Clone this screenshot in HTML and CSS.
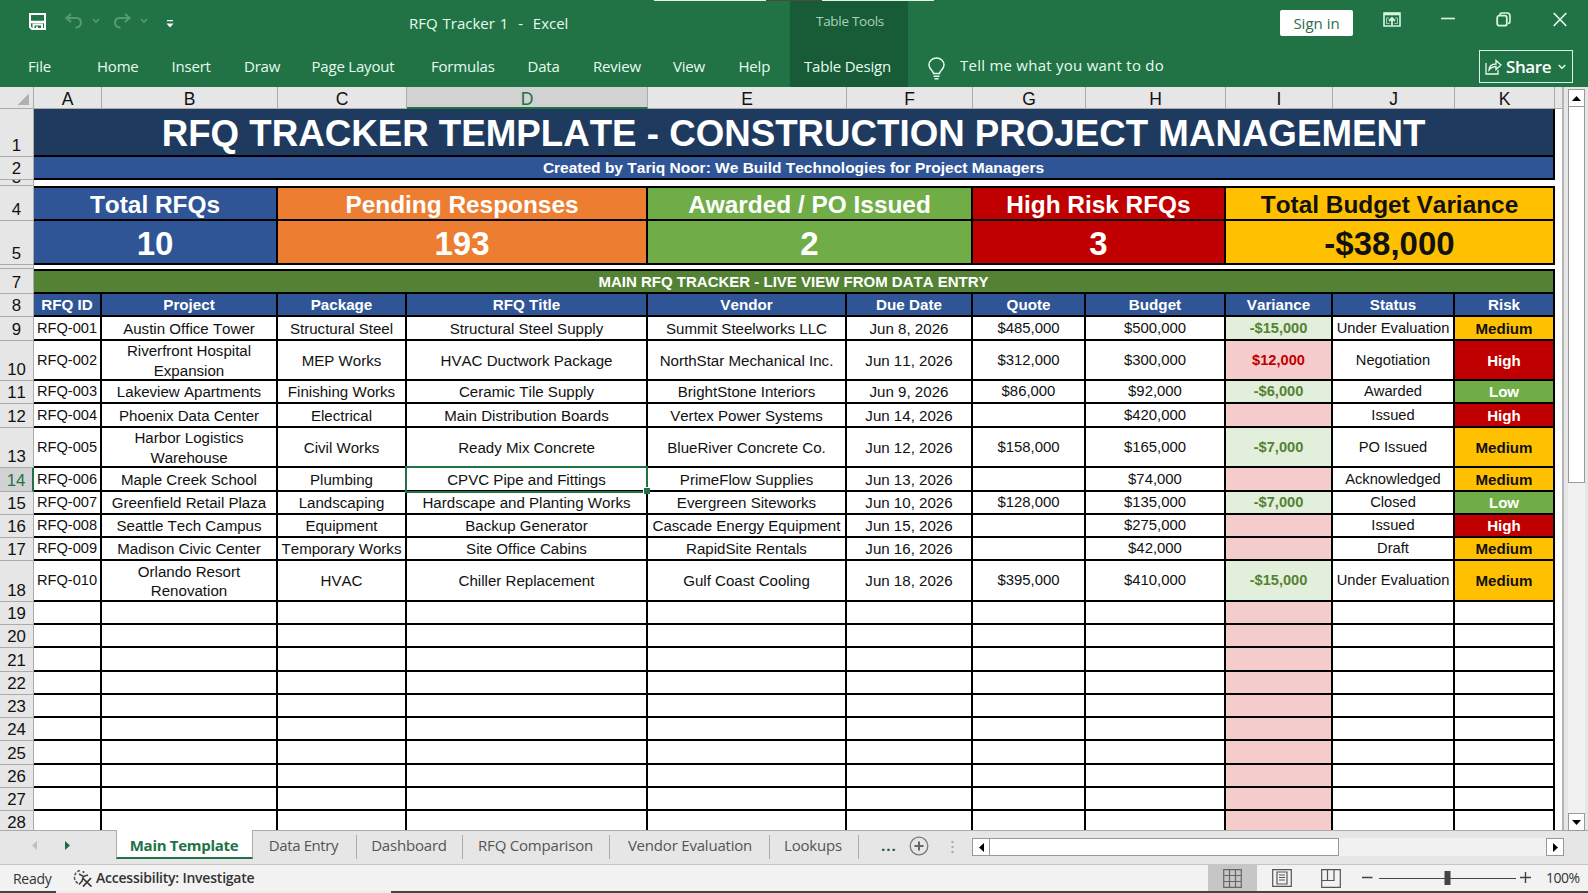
FILE: index.html
```html
<!DOCTYPE html>
<html lang="en">
<head>
	<meta charset="utf-8">
	<meta name="viewport" content="width=device-width, initial-scale=1">
	<title>RFQ Tracker 1 - Excel</title>
	<link rel="stylesheet" href="styles.css">
</head>
<body>
	<header class="ribbon">
		<div class="edge">
			<span class="edge-light"></span>
			<span class="edge-dark"></span>
			<span class="edge-light"></span>
		</div>
		<div class="titlebar">
			<div class="quick">
				<svg class="save" width="17" height="17" viewBox="0 0 17 17"><path d="M1 1h15v15H3L1 14z" fill="none" stroke="#fff" stroke-width="2"/><path d="M1 9h15" stroke="#fff" stroke-width="2.500"/><path d="M4.500 16v-4.500h8.500V16M8 16v-2.500" fill="none" stroke="#fff" stroke-width="2"/></svg>
				<svg class="undo" width="18" height="16" viewBox="0 0 18 16"><path d="M6 1L1.500 5L6 9M2 5h9c3.500 0 5 2 5 4.500c0 3-2.500 5-5.500 5" fill="none" stroke="#549a70" stroke-width="2.200"/></svg>
				<svg class="chev" width="8" height="6" viewBox="0 0 8 6"><path d="M1 1l3 3l3-3" fill="none" stroke="#549a70" stroke-width="1.600"/></svg>
				<svg class="redo" width="18" height="16" viewBox="0 0 18 16"><path d="M12 1l4.500 4L12 9M16 5H7C3.500 5 2 7 2 9.500c0 3 2.500 5 5.500 5" fill="none" stroke="#549a70" stroke-width="2.200"/></svg>
				<svg class="chev" width="8" height="6" viewBox="0 0 8 6"><path d="M1 1l3 3l3-3" fill="none" stroke="#549a70" stroke-width="1.600"/></svg>
				<svg class="custom" width="8" height="8" viewBox="0 0 8 8"><path d="M1 0h6v1.300H1zM0.500 3.500h7L4 7.500z" fill="#fff"/></svg>
			</div>
			<h1 class="doc">RFQ Tracker 1&nbsp; -&nbsp; Excel</h1>
			<div class="context-label">Table Tools</div>
			<div class="window">
				<button class="signin">Sign in</button>
				<svg class="w-ribbon" width="18" height="15" viewBox="0 0 18 15"><path d="M1 1h16v13H1z" fill="none" stroke="#d9f5e3" stroke-width="1.600"/><path d="M1 2h16" stroke="#d9f5e3" stroke-width="2.600"/><path d="M9 13V6.500M6 9l3-3l3 3" fill="none" stroke="#d9f5e3" stroke-width="1.800"/><path d="M6 6H3.500v5.500h3M12 6h2.500v5.500h-3" fill="none" stroke="#a5d1b6" stroke-width="1"/></svg>
				<svg class="w-min" width="14" height="15" viewBox="0 0 14 15"><path d="M0 6.500h14" stroke="#d9f5e3" stroke-width="1.600"/></svg>
				<svg class="w-max" width="15" height="15" viewBox="0 0 15 15"><rect x="1.200" y="3.700" width="9.600" height="10" rx="2" fill="none" stroke="#d9f5e3" stroke-width="1.800"/><path d="M4 3V2.500C4 1.500 5 1 6 1h5c2 0 3 1 3 3v5c0 1.500-.8 2.500-2 2.500" fill="none" stroke="#d9f5e3" stroke-width="1.600"/></svg>
				<svg class="w-close" width="14" height="15" viewBox="0 0 14 15"><path d="M.7 1l12.600 13M13.300 1L.7 14" stroke="#e6fbee" stroke-width="1.600"/></svg>
			</div>
		</div>
		<div class="menubar">
			<nav class="menu">
				<a>File</a><a>Home</a><a>Insert</a><a>Draw</a><a>Page Layout</a><a>Formulas</a><a>Data</a><a>Review</a><a>View</a><a>Help</a>
			</nav>
			<a class="context-tab">Table Design</a>
			<svg class="bulb" width="17" height="23" viewBox="0 0 17 23"><path d="M5.500 16.500c0-3-4.500-4-4.500-8.500a7.500 7 0 0 1 15 0c0 4.500-4.500 5.500-4.500 8.500zM5.500 19.300h6M6.500 21.800h4" fill="none" stroke="#e6fbee" stroke-width="1.500"/></svg>
			<span class="tell">Tell me what you want to do</span>
			<button class="share">
				<svg width="17" height="17" viewBox="0 0 17 17"><path d="M1 5v11h12v-4M4 12c.3-4 3-6 7-6V2.500L16 7l-5 4.500V8.500C8 8.500 6 9.500 4 12z" fill="none" stroke="#e6fbee" stroke-width="1.300"/></svg>
				Share
				<svg class="share-chev" width="8" height="6" viewBox="0 0 8 6"><path d="M.7 1L4 4.300L7.300 1" fill="none" stroke="#e6fbee" stroke-width="1.400"/></svg>
			</button>
		</div>
	</header>

	<main class="work">
		<div class="sheet"></div>
		<div class="vscroll">
			<span class="sbtn"><svg width="9" height="5" viewBox="0 0 9 5"><path d="M4.500 0L9 5H0z"/></svg></span>
			<span class="vthumb"></span>
			<span class="sbtn"><svg width="9" height="5" viewBox="0 0 9 5"><path d="M0 0h9L4.500 5z"/></svg></span>
		</div>
	</main>

	<div class="tabs">
		<svg class="nav-prev" width="5" height="9" viewBox="0 0 5 9"><path d="M5 0v9L0 4.500z" fill="#bfbfbf"/></svg>
		<svg class="nav-next" width="5" height="9" viewBox="0 0 5 9"><path d="M0 0v9l5-4.500z" fill="#1d6b41"/></svg>
		<a class="tab active">Main Template</a>
		<a class="tab t-entry">Data Entry</a>
		<a class="tab t-dash">Dashboard</a>
		<a class="tab t-comp">RFQ Comparison</a>
		<a class="tab t-vend">Vendor Evaluation</a>
		<a class="tab t-look">Lookups</a>
		<span class="more">...</span>
		<svg class="add" width="20" height="20" viewBox="0 0 20 20"><circle cx="10" cy="10" r="8.800" fill="none" stroke="#7a7a7a" stroke-width="1.300"/><path d="M10 5.500v9M5.500 10h9" stroke="#666" stroke-width="2"/></svg>
		<svg class="grip" width="3" height="14" viewBox="0 0 3 14"><path d="M.5 1h2v2h-2zM.5 6h2v2h-2zM.5 11h2v2h-2z" fill="#a6a6a6"/></svg>
		<div class="hscroll">
			<span class="sbtn"><svg width="5" height="9" viewBox="0 0 5 9"><path d="M5 0v9L0 4.500z"/></svg></span>
			<span class="hthumb"></span>
			<span class="sbtn"><svg width="5" height="9" viewBox="0 0 5 9"><path d="M0 0v9l5-4.500z"/></svg></span>
		</div>
	</div>

	<footer class="status">
		<span class="ready">Ready</span>
		<svg class="access" width="20" height="18" viewBox="0 0 20 18"><path d="M7 1.500C3 2.500 1.500 5.500 1.500 8.500c0 3 2 5.500 5 6.500" fill="none" stroke="#555" stroke-width="1.500" stroke-dasharray="3 1.500"/><path d="M6 5l4.500 2.500L15 6M10.500 7.500L9 12l-3 3.500M10.500 2v2" fill="none" stroke="#444" stroke-width="1.600"/><path d="M9.500 9l9 8.500M18 9l-8 8.500" stroke="#333" stroke-width="1.700"/></svg>
		<span class="investigate">Accessibility: Investigate</span>
		<span class="view on"><svg width="19" height="19" viewBox="0 0 19 19"><path d="M.7.700h17.600v17.600H.7zM6.500.700v17.600M12.500.700v17.600M.7 6.500h17.600M.7 12.500h17.600" fill="none" stroke="#666" stroke-width="1.200"/></svg></span>
		<span class="view"><svg width="20" height="18" viewBox="0 0 20 18"><path d="M.7.700h18.600v16.600H.7zM5 3h10v12H5zM7 6h6M7 8.500h6M7 11h6" fill="none" stroke="#555" stroke-width="1.200"/></svg></span>
		<span class="view"><svg width="20" height="19" viewBox="0 0 20 19"><path d="M.7.700h18.600v17.600H.7zM.7 11.500H13V.700M6.500.700v10.800" fill="none" stroke="#555" stroke-width="1.200"/></svg></span>
		<svg class="zoom" width="170" height="20" viewBox="0 0 170 20"><path d="M0 9.500h10.500M158 9.500h11M163.500 4v11" stroke="#444" stroke-width="1.400"/><path d="M17 10.500h137" stroke="#444" stroke-width="1.200"/><rect x="82.500" y="3" width="6" height="14" fill="#444"/></svg>
		<span class="percent">100%</span>
	</footer>
	<div class="taskbar"><span></span></div>

<script type="text/javascript">
	let sheet = document.querySelector(".sheet")
	let letters = ["A", "B", "C", "D", "E", "F", "G", "H", "I", "J", "K"]
	let heads = ["RFQ ID", "Project", "Package", "RFQ Title", "Vendor", "Due Date", "Quote", "Budget", "Variance", "Status", "Risk"]
	let rfqs = [
		["RFQ-001", "Austin Office Tower", "Structural Steel", "Structural Steel Supply", "Summit Steelworks LLC", "Jun 8, 2026", "$485,000", "$500,000", "-$15,000", "Under Evaluation", "Medium"],
		["RFQ-002", "Riverfront Hospital Expansion", "MEP Works", "HVAC Ductwork Package", "NorthStar Mechanical Inc.", "Jun 11, 2026", "$312,000", "$300,000", "$12,000", "Negotiation", "High"],
		["RFQ-003", "Lakeview Apartments", "Finishing Works", "Ceramic Tile Supply", "BrightStone Interiors", "Jun 9, 2026", "$86,000", "$92,000", "-$6,000", "Awarded", "Low"],
		["RFQ-004", "Phoenix Data Center", "Electrical", "Main Distribution Boards", "Vertex Power Systems", "Jun 14, 2026", "", "$420,000", "", "Issued", "High"],
		["RFQ-005", "Harbor Logistics Warehouse", "Civil Works", "Ready Mix Concrete", "BlueRiver Concrete Co.", "Jun 12, 2026", "$158,000", "$165,000", "-$7,000", "PO Issued", "Medium"],
		["RFQ-006", "Maple Creek School", "Plumbing", "CPVC Pipe and Fittings", "PrimeFlow Supplies", "Jun 13, 2026", "", "$74,000", "", "Acknowledged", "Medium"],
		["RFQ-007", "Greenfield Retail Plaza", "Landscaping", "Hardscape and Planting Works", "Evergreen Siteworks", "Jun 10, 2026", "$128,000", "$135,000", "-$7,000", "Closed", "Low"],
		["RFQ-008", "Seattle Tech Campus", "Equipment", "Backup Generator", "Cascade Energy Equipment", "Jun 15, 2026", "", "$275,000", "", "Issued", "High"],
		["RFQ-009", "Madison Civic Center", "Temporary Works", "Site Office Cabins", "RapidSite Rentals", "Jun 16, 2026", "", "$42,000", "", "Draft", "Medium"],
		["RFQ-010", "Orlando Resort Renovation", "HVAC", "Chiller Replacement", "Gulf Coast Cooling", "Jun 18, 2026", "$395,000", "$410,000", "-$15,000", "Under Evaluation", "Medium"]
	]
	let html = ""

	function cell(classes, text) {
		html += `<div class="${classes}">${text}</div>`
	}

	function rowHead(n) {
		let extra = n == 3 ? " tiny" : n == 14 ? " current" : ""
		cell("rh" + extra, n == 6 ? "" : n)
	}

	cell("corner", "")
	letters.forEach(l => cell(l == "D" ? "ch current" : "ch", l))
	cell("ch-rest", "")

	rowHead(1)
	cell("cell all title", "RFQ TRACKER TEMPLATE - CONSTRUCTION PROJECT MANAGEMENT")
	rowHead(2)
	cell("cell all subtitle", "Created by Tariq Noor: We Build Technologies for Project Managers")
	rowHead(3)
	cell("spacer", "")

	let kpis = [["Total RFQs", "10", "blue s2"], ["Pending Responses", "193", "orange s2"], ["Awarded / PO Issued", "2", "green s2"], ["High Risk RFQs", "3", "red s2"], ["Total Budget Variance", "-$38,000", "yellow s3"]]
	rowHead(4)
	kpis.forEach(k => cell("cell kpi-label " + k[2], k[0]))
	rowHead(5)
	kpis.forEach(k => cell("cell kpi-value " + k[2], k[1]))
	rowHead(6)
	cell("spacer", "")
	rowHead(7)
	cell("cell all section", "MAIN RFQ TRACKER - LIVE VIEW FROM DATA ENTRY")
	rowHead(8)
	heads.forEach(h => cell("cell blue th", h))

	let risk = { Medium: "yellow", High: "red", Low: "green" }
	for (let n = 9; n <= 28; n++) {
		rowHead(n)
		let data = rfqs[n - 9] || letters.map(() => "")
		data.forEach((text, i) => {
			let c = "cell data col-" + letters[i].toLowerCase()
			if (i == 8) c += text[0] == "-" ? " good" : " bad"
			if (i == 10 && text) c += " " + risk[text]
			if (i == 3 && n == 14) c += " selected"
			cell(c, text)
		})
	}
	sheet.innerHTML = html
</script>
</body>
</html>
```
FILE: styles.css
```css
*{
	box-sizing: border-box;
	margin: 0;
}

body{
	width: 1588px;
	height: 893px;
	overflow: hidden;
	display: flex;
	flex-direction: column;
	background: #e6e6e6;
	font-family: 'Open Sans', 'Noto Sans', sans-serif;
	font-kerning: none;
}

svg{
	display: block;
	flex: none;
}

button{
	font-family: inherit;
	padding: 0;
}

/* ribbon */
.ribbon{
	height: 87px;
	flex: none;
	background: #217346;
	color: #e6fbee;
	display: flex;
	flex-direction: column;
}

.edge{
	height: 1px;
	display: flex;
	padding-left: 654px;
}

.edge-light{
	width: 112px;
	background: #e3f5ea;
}

.edge-dark{
	width: 56px;
	background: #4d4a3c;
}

.titlebar{
	height: 43px;
	display: flex;
}

.quick{
	width: 409px;
	display: flex;
	align-items: flex-start;
	padding: 12px 0 0 29px;
}

.undo{
	margin-left: 19px;
}

.chev{
	margin: 5px 0 0 9px;
}

.redo{
	margin-left: 13px;
}

.custom{
	margin: 7px 0 0 18px;
}

.doc{
	width: 381px;
	font-size: 15px;
	font-weight: 400;
	line-height: 45px;
	word-spacing: 1px;
	white-space: nowrap;
}

.context-label{
	width: 118px;
	background: #185c37;
	text-align: center;
	font-size: 13.5px;
	line-height: 41px;
	letter-spacing: -0.3px;
	padding-left: 2px;
	color: #a9d3b9;
}

.window{
	flex: 1;
	display: flex;
	align-items: flex-start;
	padding: 11px 21px 0 0;
	justify-content: flex-end;
}

.signin{
	width: 73px;
	height: 26px;
	margin: -2px 30px 0 0;
	border: none;
	border-radius: 2px;
	background: #fff;
	color: #2f6b4a;
	font-size: 15px;
}

.w-min{
	margin-left: 40px;
}

.w-max{
	margin-left: 41px;
}

.w-close{
	margin-left: 42px;
}

.menubar{
	height: 43px;
	display: flex;
	font-size: 15px;
	line-height: 44px;
	letter-spacing: -0.2px;
	white-space: nowrap;
}

.menu{
	width: 790px;
	padding-left: 28px;
	display: grid;
	grid-template-columns: 69px 74.5px 72.5px 67.5px 119.5px 96.5px 65.5px 80px 65.5px 51px;
}

.context-tab{
	width: 118px;
	background: #185c37;
	padding-left: 14px;
}

.bulb{
	margin: 13px 15px 0 20px;
}

.tell{
	line-height: 42px;
	letter-spacing: 0.25px;
}

.share{
	width: 94px;
	height: 33px;
	margin: 6px 15px 0 auto;
	border: 1px solid #d9f5e3;
	background: none;
	color: #fff;
	font-size: 17px;
	font-weight: 600;
	letter-spacing: -0.4px;
	display: flex;
	align-items: center;
	padding-left: 5px;
	gap: 4px;
}

.share-chev{
	margin-left: 3px;
}

/* sheet */
.work{
	height: 744px;
	flex: none;
	display: flex;
	border-bottom: 1px solid #ababab;
}

.sheet{
	width: 1564px;
	overflow: hidden;
	background: #fff;
	border-right: 2px solid #b5b5b5;
	display: grid;
	grid-template-columns: 34px 68px 176px 129px 241px 199px 126px 113px 140px 107px 122px 100px 7px;
	grid-template-rows: 22px 48px 23px 6px 35px 44px 4px 25px 23px 24px 40px 23px 24px 40px 24px 23px 23px 23px 41px 23px 23px 24px 23px 23px 23px 24px 23px 23px 23px;
	font-family: 'Liberation Sans', Arial, sans-serif;
	font-size: 15.1px;
	color: #111;
}

.corner, .ch, .ch-rest, .rh{
	background: #e6e6e6;
}

.corner{
	border-right: 1px solid #ababab;
	border-bottom: 1px solid #ababab;
	background: linear-gradient(135deg, transparent 50%, #b1b1b1 50%) 17px 7px / 12px 11px no-repeat #e6e6e6;
}

.ch{
	border-right: 1px solid #ababab;
	border-bottom: 1px solid #ababab;
	text-align: center;
	font-size: 17.5px;
	line-height: 24px;
}

.ch.current{
	background: #d2d2d2;
	border-bottom: 2px solid #217346;
	color: #217346;
}

.ch-rest{
	border-bottom: 1px solid #ababab;
}

.rh{
	grid-column: 1;
	border-right: 1px solid #ababab;
	border-bottom: 1px solid #ababab;
	overflow: hidden;
	display: flex;
	align-items: flex-end;
	justify-content: center;
	font-size: 16.8px;
	line-height: 20px;
}

.rh.tiny{
	line-height: 14px;
}

.rh.current{
	background: #d2d2d2;
	border-right: 2px solid #217346;
	color: #217346;
}

.spacer{
	grid-column: 2 / 13;
}

.cell{
	border-right: 2px solid #000;
	border-bottom: 2px solid #000;
	display: flex;
	align-items: center;
	justify-content: center;
	text-align: center;
	line-height: 19.5px;
	min-width: 0;
}

.data{
	padding-top: 1px;
}

.all{
	grid-column: 2 / 13;
	color: #fff;
	font-weight: 700;
}

.s2{
	grid-column: span 2;
}

.s3{
	grid-column: span 3;
}

.title{
	padding-top: 4px;
	background: #1f3a5f;
	font-size: 36.7px;
}

.subtitle{
	background: #2f5597;
	font-size: 15.5px;
}

.section{
	background: #548235;
	border-top: 2px solid #000;
	font-size: 15px;
}

.kpi-label{
	padding-top: 2px;
	border-top: 2px solid #000;
	font-size: 24.4px;
	font-weight: 700;
}

.kpi-value{
	padding-top: 3px;
	font-size: 33px;
	font-weight: 700;
}

.blue{
	background: #2f5597;
	color: #fff;
}

.orange{
	background: #ed7d31;
	color: #fff;
}

.green{
	background: #70ad47;
	color: #fff;
}

.red{
	background: #c00000;
	color: #fff;
}

.yellow{
	background: #ffc000;
	color: #111;
}

.th{
	font-size: 15.2px;
	font-weight: 700;
}

.col-a{
	font-size: 14.6px;
}

.col-b{
	padding: 1px 8px 0;
}

.col-c, .col-e{
	white-space: nowrap;
}

.col-g, .col-h{
	font-size: 14.9px;
}

.col-i, .col-k{
	font-weight: 700;
}

.col-i{
	font-size: 14.6px;
}

.col-j{
	font-size: 14.7px;
	white-space: nowrap;
}

.good{
	background: #e2efda;
	color: #548235;
}

.bad{
	background: #f4cccc;
	color: #c00000;
}

/* the frame sits over the borders of the neighbouring cells */
.selected{
	position: relative;
}

.selected::before{
	content: "";
	position: absolute;
	inset: -2px -2px -3px -2px;
	border: 2px solid #217346;
}

.selected::after{
	content: "";
	position: absolute;
	right: -4px;
	bottom: -4px;
	width: 6px;
	height: 6px;
	background: #217346;
	border: solid #fff;
	border-width: 1px 0 0 1px;
}

.vscroll{
	width: 17px;
	margin: 2px 0 -1px 4px;
	display: flex;
	flex-direction: column;
	justify-content: space-between;
	background: #f1f1f1;
}

.sbtn{
	width: 18px;
	height: 18px;
	flex: none;
	border: 1px solid #999;
	background: #fff;
	display: flex;
	align-items: center;
	justify-content: center;
}

.vscroll .sbtn{
	width: 17px;
}

.vthumb{
	height: 377px;
	margin: -1px 0 auto;
	border: 1px solid #999;
	background: #fff;
}

/* sheet tabs */
.tabs{
	height: 33px;
	flex: none;
	display: flex;
	align-items: flex-start;
	font-size: 15px;
	line-height: 29px;
	letter-spacing: -0.2px;
	color: #555;
	white-space: nowrap;
}

.nav-prev{
	margin: 10px 0 0 32px;
}

.nav-next{
	margin: 10px 0 0 28px;
}

.tab{
	position: relative;
	height: 28px;
	text-align: center;
}

.tab::after{
	content: "";
	position: absolute;
	right: 0;
	top: 4px;
	width: 1px;
	height: 24px;
	background: #ababab;
}

.tab.active{
	width: 137px;
	margin: -1px 0 0 46px;
	height: 29px;
	background: #fff;
	border: solid #ababab;
	border-width: 0 1px;
	border-bottom: 2px solid #217346;
	color: #217346;
	font-weight: 700;
	letter-spacing: -0.3px;
	line-height: 30px;
	padding-right: 1px;
}

.tab.active::after{
	display: none;
}

.t-entry{
	width: 104px;
	padding-right: 3px;
	letter-spacing: -0.4px;
}

.t-dash{
	width: 106px;
	padding-right: 2px;
}

.t-comp{
	width: 147px;
	padding-right: 2px;
}

.t-vend{
	width: 160px;
}

.t-look{
	width: 89px;
	padding-right: 3px;
}

.more{
	margin-left: 22px;
	width: 28px;
	font-weight: 700;
	color: #1d5c3a;
	letter-spacing: 1px;
}

.add{
	margin-top: 5px;
}

.grip{
	margin: 9px 0 0 22px;
}

.hscroll{
	width: 592px;
	height: 18px;
	margin: 7px 0 0 18px;
	display: flex;
	background: #f1f1f1;
}

.hthumb{
	width: 350px;
	margin: 0 auto 0 -1px;
	border: 1px solid #999;
	background: #fff;
}

/* status bar */
.status{
	height: 27px;
	flex: none;
	display: flex;
	align-items: center;
	background: #f2f2f2;
	border-top: 1px solid #c6c6c6;
	color: #333;
	font-size: 14px;
	letter-spacing: -0.3px;
	white-space: nowrap;
}

.ready{
	width: 73px;
	padding: 1px 0 0 13px;
}

.access{
	margin-right: 3px;
}

.investigate{
	font-weight: 600;
	letter-spacing: -0.22px;
	padding-bottom: 1px;
	margin-right: auto;
}

.view{
	width: 49px;
	height: 26px;
	display: flex;
	align-items: center;
	justify-content: center;
}

.view.on{
	background: #c6c6c6;
}

.zoom{
	margin: 0 14px 0 7px;
}

.percent{
	width: 42px;
	padding-bottom: 2px;
	letter-spacing: -0.5px;
}

.taskbar{
	flex: 1;
	background: #444;
	padding-left: 56px;
}

.taskbar span{
	display: block;
	width: 335px;
	height: 2px;
	background: #ececec;
}
```
